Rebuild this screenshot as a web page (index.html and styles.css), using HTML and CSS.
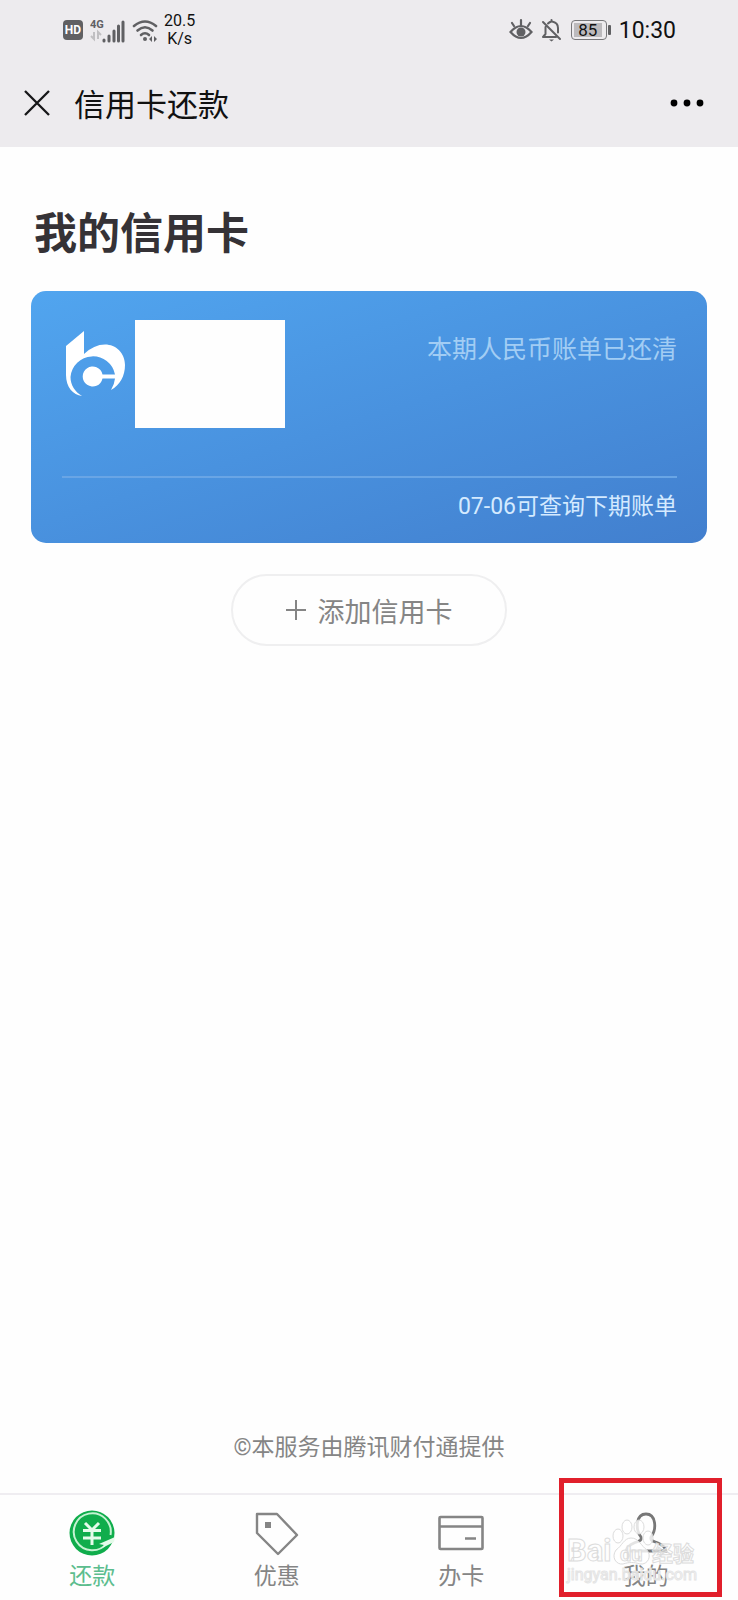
FILE: index.html
```html
<!DOCTYPE html>
<html lang="zh-CN">
<head>
    <meta charset="UTF-8">
    <meta name="viewport" content="width=device-width, initial-scale=1.0">
    <title>信用卡还款</title>
    <link rel="stylesheet" href="styles.css">
</head>
<body>
    <header class="header">
        <div class="status-bar">
            <div class="status-left">
                <svg width="22" height="22" viewBox="0 0 22 22">
                    <rect x="1" y="1" width="20" height="20" rx="4" fill="#606063"/>
                    <text x="11" y="15" class="hd-text">HD</text>
                </svg>
                <svg width="36" height="26" viewBox="0 0 36 26">
                    <text x="0" y="11" class="net-text">4G</text>
                    <path d="M4 15v7l-3-3M8 22v-7l3 3" fill="none" stroke="#c0bfc2" stroke-width="2"/>
                    <path d="M14 23v1M19 19v5M24 14v10M28.500 9v15M33 5v19" fill="none" stroke="#606063" stroke-width="3" stroke-linecap="round"/>
                </svg>
                <svg width="26" height="26" viewBox="0 0 26 26">
                    <g fill="none" stroke="#606063" stroke-width="2.600" stroke-linecap="round">
                        <path d="M2 9q11-9 22 0"/>
                        <path d="M5.500 13.500q7.500-6.500 15 0"/>
                        <path d="M9 18q4-3.500 8 0"/>
                    </g>
                    <circle cx="13" cy="22" r="2" fill="#606063"/>
                    <path d="M20 19v6l-3-3zM22 25v-6l3 3z" fill="#606063"/>
                </svg>
                <div class="speed">20.5<br>K/s</div>
            </div>
            <div class="status-right">
                <svg width="24" height="24" viewBox="0 0 24 24">
                    <g fill="none" stroke="#606063" stroke-width="2.200" stroke-linecap="round">
                        <path d="M1.500 14Q12 2 22.500 14Q12 26 1.500 14z"/>
                        <path d="M12 7V2M5 8L3 5M19 8l2-3"/>
                    </g>
                    <circle cx="12" cy="14" r="4.500" fill="#606063"/>
                </svg>
                <svg width="22" height="24" viewBox="0 0 22 24">
                    <g fill="none" stroke="#606063" stroke-width="2" stroke-linecap="round" stroke-linejoin="round">
                        <path d="M2 4l17 17M4.500 9v7L2 19h13M7 5.500q1.500-1.500 3.500-2V2M11 3.500q6 1 6 6.500v4.500"/>
                    </g>
                    <path d="M8 21.500h5l-2.500 2z" fill="#606063"/>
                </svg>
                <div class="battery"><span>85</span></div>
                <time class="clock">10:30</time>
            </div>
        </div>
        <div class="title-bar">
            <button class="icon-button" aria-label="关闭">
                <svg width="26" height="26" viewBox="0 0 26 26">
                    <path d="M1 1l24 24M25 1L1 25" stroke="#161618" stroke-width="2.300"/>
                </svg>
            </button>
            <div class="page-title">信用卡还款</div>
            <button class="icon-button" aria-label="更多">
                <svg width="34" height="8" viewBox="0 0 34 8">
                    <circle cx="4" cy="4" r="3.400"/>
                    <circle cx="17" cy="4" r="3.400"/>
                    <circle cx="30" cy="4" r="3.400"/>
                </svg>
            </button>
        </div>
    </header>

    <main class="content">
        <h1>我的信用卡</h1>
        <section class="card">
            <div class="card-top">
                <svg class="bank-logo" width="62" height="68" viewBox="0 0 62 68">
                    <path d="M19 0L1 15V44C1 56 8 64 17 65C10 61 5.500 54 5.500 46A22.500 22.500 0 0 1 50 43.500H37.500A10 10 0 1 0 37.500 47.500H50Q49.500 53 46 59C55 54 60 45 60 34C60 22 51 13.500 40 13.500Q29 13.500 19 23Z" fill="#fff"/>
                </svg>
                <div class="card-name"></div>
                <div class="card-status">本期人民币账单已还清</div>
            </div>
            <div class="card-bottom">07-06可查询下期账单</div>
        </section>
        <button class="add-button">
            <svg width="20" height="20" viewBox="0 0 20 20">
                <path d="M10 0v20M0 10h20" stroke="#858585" stroke-width="2"/>
            </svg>
            添加信用卡
        </button>
        <p class="copyright">©本服务由腾讯财付通提供</p>
    </main>

    <nav class="tabs">
        <a href="#" class="tab active">
            <svg width="46" height="46" viewBox="0 0 46 46">
                <circle cx="23" cy="23" r="22.500" fill="#10ad4c"/>
                <path d="M38 33A18.500 18.500 0 1 1 41.500 25" fill="none" stroke="#c5f3d2" stroke-width="2"/>
                <path d="M46 27L30 34l5 1-2 3 12-6z" fill="#e5fbea"/>
                <path d="M16 13l7 7 7-7M14 20.500h18M14 28h18M23 20v15" fill="none" stroke="#e5fbea" stroke-width="3"/>
            </svg>
            还款
        </a>
        <a href="#" class="tab">
            <svg width="46" height="46" viewBox="0 0 46 46">
                <path d="M3 4h20l20 21-19 19L3 23z" fill="none" stroke="#858585" stroke-width="2.400" stroke-linejoin="round"/>
                <rect x="11" y="12" width="6" height="6" fill="#858585"/>
            </svg>
            优惠
        </a>
        <a href="#" class="tab">
            <svg width="46" height="46" viewBox="0 0 46 46">
                <rect x="1.500" y="7" width="43" height="32" rx="1" fill="none" stroke="#858585" stroke-width="2.600"/>
                <path d="M1 16.500h44M27 28.500h11" stroke="#858585" stroke-width="2.600"/>
            </svg>
            办卡
        </a>
        <a href="#" class="tab">
            <svg width="46" height="46" viewBox="0 0 46 46">
                <path d="M18 27C12 19 13 4 23 4S34 19 28 27C27 31 30 31 35 33Q42 36 43 41H3Q4 36 11 33C16 31 19 31 18 27z" fill="none" stroke="#777" stroke-width="2.800"/>
            </svg>
            我的
            <svg class="watermark" width="138" height="72" viewBox="0 0 138 72">
                <g class="paw">
                    <ellipse cx="54" cy="18" rx="5" ry="7"/>
                    <ellipse cx="63" cy="9" rx="5" ry="7"/>
                    <ellipse cx="75" cy="9" rx="5" ry="7"/>
                    <ellipse cx="84" cy="20" rx="5" ry="7"/>
                    <path d="M67 20c-7 0-9 8-15 12-5 7 0 15 7 14 6-2 11-2 17 0 8 1 12-8 7-14-6-4-8-12-16-12z"/>
                </g>
                <text x="3" y="43" class="mark-large">Bai</text>
                <text x="56" y="43" class="mark-du">du</text>
                <text x="88" y="43" class="mark-cn">经验</text>
                <text x="3" y="62" class="mark-url">jingyan.baidu.com</text>
            </svg>
            <span class="highlight"></span>
        </a>
    </nav>
</body>
</html>
```
FILE: styles.css
```css
* {
    box-sizing: border-box;
}
body {
    display: flex;
    flex-direction: column;
    min-height: 100vh;
    margin: 0;
    background: #fefefe;
    color: #111;
    font-family: Roboto, "Noto Sans CJK SC", sans-serif;
}
svg {
    display: block;
    flex-shrink: 0;
}
button {
    font-family: inherit;
    cursor: pointer;
}
.header {
    background: #edebee;
}
.status-bar {
    display: flex;
    justify-content: space-between;
    align-items: center;
    height: 60px;
    padding: 0 62px;
}
.status-left {
    display: flex;
    align-items: center;
    gap: 6px;
}
.hd-text {
    font-size: 12px;
    font-weight: 700;
    fill: #fff;
    text-anchor: middle;
}
.net-text {
    font-size: 11px;
    font-weight: 700;
    fill: #606063;
}
.speed {
    font-size: 16px;
    line-height: 18px;
    text-align: center;
}
.status-right {
    display: flex;
    align-items: center;
    gap: 8px;
}
.battery {
    position: relative;
    width: 36px;
    height: 20px;
    margin-right: 4px;
    padding: 2px;
    border: 1px solid #77777a;
    border-radius: 4px;
}
.battery span {
    display: block;
    width: 28px;
    background: #bcbabd;
    font-size: 17px;
    line-height: 14px;
    text-align: center;
}
.battery::after {
    content: "";
    position: absolute;
    top: 4px;
    right: -5px;
    width: 3px;
    height: 10px;
    border-radius: 1px;
    background: #606063;
}
.clock {
    font-size: 23px;
}
.title-bar {
    display: flex;
    align-items: center;
    height: 87px;
    padding: 0 34px 2px 24px;
}
.icon-button {
    padding: 0;
    border: none;
    background: none;
}
.page-title {
    flex: 1;
    margin-left: 24px;
    font-size: 31px;
}
.content {
    display: flex;
    flex: 1;
    flex-direction: column;
    padding: 55px 31px 30px;
}
h1 {
    margin: 0 3px 25px;
    color: #353236;
    font-size: 43px;
    font-weight: 700;
    line-height: 64px;
}
.card {
    padding: 29px 30px 0 31px;
    border-radius: 15px;
    background: linear-gradient(162deg, #51a5ef 0%, #4992df 50%, #427fce 100%);
    color: #fff;
}
.card-top {
    display: flex;
    align-items: flex-start;
    height: 158px;
    border-bottom: 2px solid #69a5e5;
}
.bank-logo {
    margin: 11px 8px 0 3px;
}
.card-name {
    width: 150px;
    height: 108px;
    background: #fefefe;
}
.card-status {
    margin-left: auto;
    color: #a2cdf4;
    font-size: 25px;
    line-height: 60px;
}
.card-bottom {
    padding-bottom: 8px;
    color: #d4eaff;
    font-size: 23px;
    line-height: 57px;
    text-align: right;
}
.add-button {
    display: flex;
    align-items: center;
    justify-content: center;
    align-self: center;
    gap: 12px;
    width: 276px;
    height: 72px;
    margin-top: 31px;
    border: 2px solid #efeff0;
    border-radius: 36px;
    background: none;
    color: #858585;
    font-size: 27px;
}
.copyright {
    margin: auto 0 0;
    color: #858585;
    font-size: 23px;
    line-height: 30px;
    text-align: center;
}
.tabs {
    display: flex;
    border-top: 2px solid #efedf1;
}
.tab {
    display: flex;
    position: relative;
    flex: 1;
    flex-direction: column;
    align-items: center;
    gap: 5px;
    padding: 15px 0 8px;
    color: #858585;
    font-size: 23px;
    line-height: 31px;
    text-decoration: none;
}
.tab.active {
    color: #5cbd8e;
}
.watermark {
    position: absolute;
    bottom: 10px;
    left: 10px;
    fill: #fff;
    stroke: #dcdcdc;
    stroke-width: 1px;
    fill-opacity: 0.6;
}
.paw {
    fill-opacity: 0.8;
}
.mark-large {
    font-size: 31px;
    font-weight: 700;
}
.mark-du {
    font-size: 20px;
    font-weight: 700;
}
.mark-cn {
    font-size: 21px;
    font-weight: 700;
}
.mark-url {
    font-size: 16px;
    stroke: #e4e4e4;
}
.highlight {
    position: absolute;
    top: -17px;
    right: 16px;
    bottom: 3px;
    left: 5px;
    border: 5px solid #e11f2b;
}
```
